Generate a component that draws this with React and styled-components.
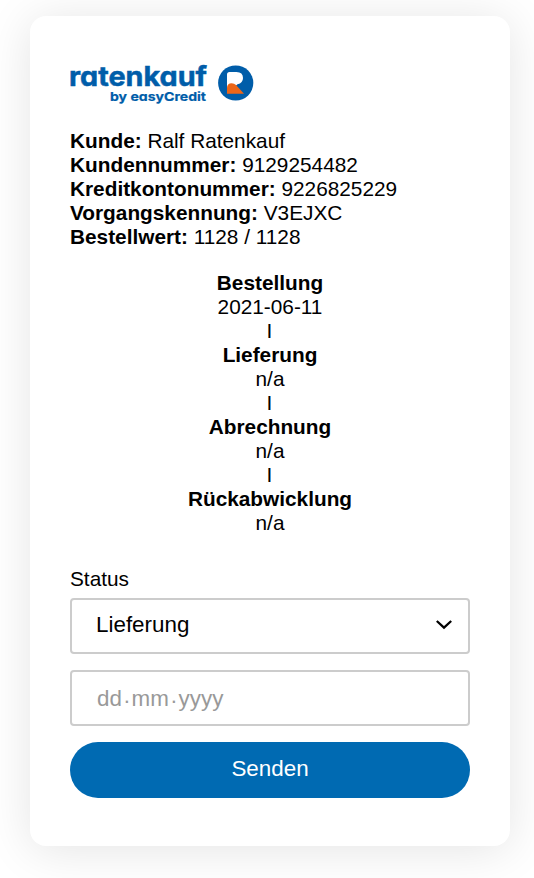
import React from "react";
import styled, { createGlobalStyle } from "styled-components";

const GlobalStyle = createGlobalStyle`
  * { box-sizing: border-box; }
  body {
    margin: 0;
    background: #fff;
    color: #000;
    font-family: "Liberation Sans", Helvetica, Arial, sans-serif;
    font-size: 20.8px;
    line-height: 24px;
  }
`;

const Page = styled.main`
  height: 878px;
  padding: 16px 24px 32px 30px;
  overflow: hidden;
`;

const Card = styled.section`
  width: 480px;
  height: 830px;
  padding: 40px;
  border-radius: 16px;
  background: #fff;
  box-shadow: 0 4px 48px rgba(0, 0, 0, 0.11);
`;

const Logo = styled.svg`
  display: block;
  width: 190px;
  height: 56px;
  margin-bottom: 17px;
`;

const LogoText = styled.text`
  font-family: Inter, sans-serif;
  font-weight: 700;
  font-size: ${(p) => p.$size}px;
  font-feature-settings: "cv11";
  fill: #005da9;
  stroke: #005da9;
  stroke-width: ${(p) => p.$stroke}px;
`;

const Details = styled.div`
  margin-bottom: 22px;
`;

const Row = styled.div`
  white-space: nowrap;
`;

const Label = styled.strong`
  font-weight: 700;
`;

const Timeline = styled.div`
  display: flex;
  flex-direction: column;
  align-items: center;
  margin-bottom: 32px;
`;

const Divider = styled.span`
  padding-right: 1px;
`;

const FieldLabel = styled.label`
  display: block;
  margin-bottom: 7px;
`;

const Field = styled.div`
  display: flex;
  align-items: center;
  justify-content: space-between;
  height: 56px;
  margin-bottom: 16px;
  padding: ${(p) => (p.$muted ? "2px 15px 0 25px" : "0 15px 3px 24px")};
  border: 2px solid #ccc;
  border-radius: 4px;
  font-size: 22.4px;
  color: ${(p) => (p.$muted ? "#999" : "#000")};
`;

const DateParts = styled.span`
  display: flex;
`;

const Dot = styled.span`
  width: 9.7px;
  text-align: center;
  transform: translateY(-3px);
`;

const Submit = styled.button`
  display: block;
  width: 100%;
  height: 56px;
  padding: 0 0 3px;
  border: 0;
  border-radius: 28px;
  background: #006ab2;
  color: #fff;
  font: 22.4px "Liberation Sans", Helvetica, Arial, sans-serif;
`;

const customer = [
  ["Kunde:", "Ralf Ratenkauf"],
  ["Kundennummer:", "9129254482"],
  ["Kreditkontonummer:", "9226825229"],
  ["Vorgangskennung:", "V3EJXC"],
  ["Bestellwert:", "1128 / 1128"],
];

const steps = [
  ["Bestellung", "2021-06-11"],
  ["Lieferung", "n/a"],
  ["Abrechnung", "n/a"],
  ["Rückabwicklung", "n/a"],
];

export default function App() {
  return (
    <>
      <GlobalStyle />
      <Page>
        <Card>
          <Logo viewBox="0 0 190 56" role="img" aria-label="ratenkauf by easyCredit">
            <LogoText $size={27} $stroke={0.5} x="-1" y="29.7" textLength="138" lengthAdjust="spacingAndGlyphs">
              ratenkauf
            </LogoText>
            <LogoText $size={12.4} $stroke={0.2} x="40" y="45" textLength="96" lengthAdjust="spacingAndGlyphs">
              by easyCredit
            </LogoText>
            <circle cx="165.7" cy="27" r="17.6" fill="#005da9" />
            <path d="M157 33V18.5Q157 16 159.5 16H166.5Q173 16 173 22Q173 27 167.5 28.3L162 33Z" fill="#fff" />
            <path d="M157 37.8V32Q157 27.3 161.7 27.3Q164.3 27.3 166 29L174 37.8Z" fill="#ec6618" />
          </Logo>
          <Details>
            {customer.map(([label, value]) => (
              <Row key={label}>
                <Label>{label}</Label> {value}
              </Row>
            ))}
          </Details>
          <Timeline>
            {steps.map(([label, value], i) => (
              <React.Fragment key={label}>
                {i > 0 && <Divider>I</Divider>}
                <Label>{label}</Label>
                <span>{value}</span>
              </React.Fragment>
            ))}
          </Timeline>
          <FieldLabel>Status</FieldLabel>
          <Field>
            <span>Lieferung</span>
            <svg width="18" height="12" viewBox="0 0 18 12" fill="none" stroke="#000" strokeWidth="2.3">
              <path d="M1.8 2 9 8.6 16.2 2" />
            </svg>
          </Field>
          <Field $muted>
            <DateParts>
              <span>dd</span>
              <Dot>.</Dot>
              <span>mm</span>
              <Dot>.</Dot>
              <span>yyyy</span>
            </DateParts>
          </Field>
          <Submit type="button">Senden</Submit>
        </Card>
      </Page>
    </>
  );
}
